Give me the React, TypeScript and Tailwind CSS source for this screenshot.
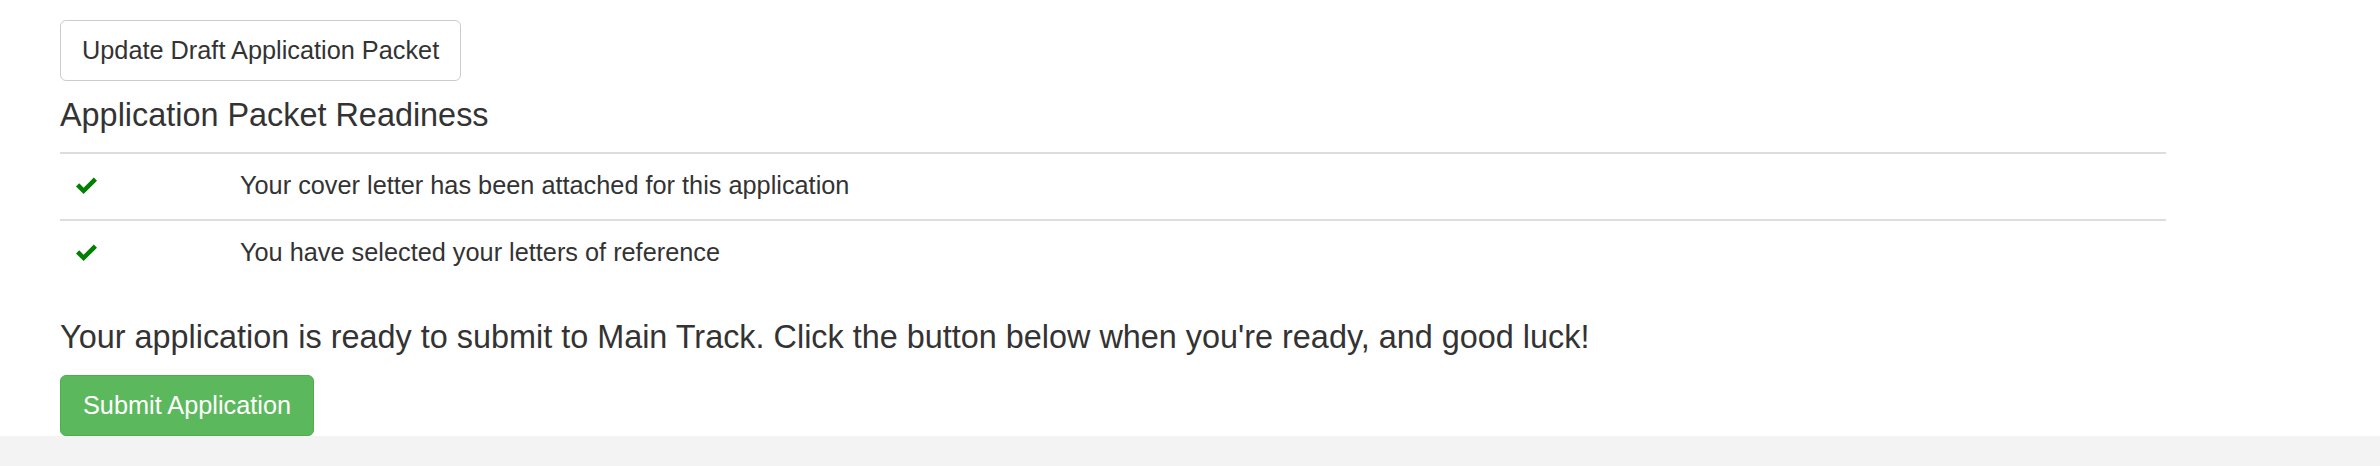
const checks = [
  'Your cover letter has been attached for this application',
  'You have selected your letters of reference',
]

function CheckIcon() {
  return (
    <svg className="block w-[21px] h-[17px]" viewBox="0 0 21 17" fill="#008000">
      <polygon points="0,9.5 3.2,6.3 7.6,10.7 17.8,0.5 21,3.7 7.6,17" />
    </svg>
  )
}

export default function App() {
  return (
    <div className="w-[2380px] min-h-[466px] flex flex-col bg-white text-[#333] font-['Liberation_Sans',Arial,sans-serif]">
      <div className="pl-[60px] pt-[20px]">
        <button className="h-[61px] px-[21px] border border-[#ccc] rounded-[6px] bg-white text-[25.3px] leading-[35px] text-[#333]">
          Update Draft Application Packet
        </button>

        <h4 className="mt-[17px] mb-[19px] text-[32.4px] leading-[35px] font-normal">
          Application Packet Readiness
        </h4>

        <div className="w-[2106px]">
          {checks.map((text) => (
            <div key={text} className="flex h-[67px] border-t-2 border-[#ddd]">
              <div className="w-[180px] pl-[16px] pt-[23px]">
                <CheckIcon />
              </div>
              <div className="pt-[14px] text-[25.3px] leading-[35px]">{text}</div>
            </div>
          ))}
        </div>

        <p className="mt-[34px] text-[32.4px] leading-[35px]">
          Your application is ready to submit to Main Track. Click the button below when you're ready, and good luck!
        </p>

        <button className="mt-[20px] h-[61px] px-[22px] border border-[#4cae4c] rounded-[6px] bg-[#5cb85c] text-white text-[25.3px] leading-[35px]">
          Submit Application
        </button>
      </div>
      <div className="flex-1 bg-[#f3f3f3]" />
    </div>
  )
}
